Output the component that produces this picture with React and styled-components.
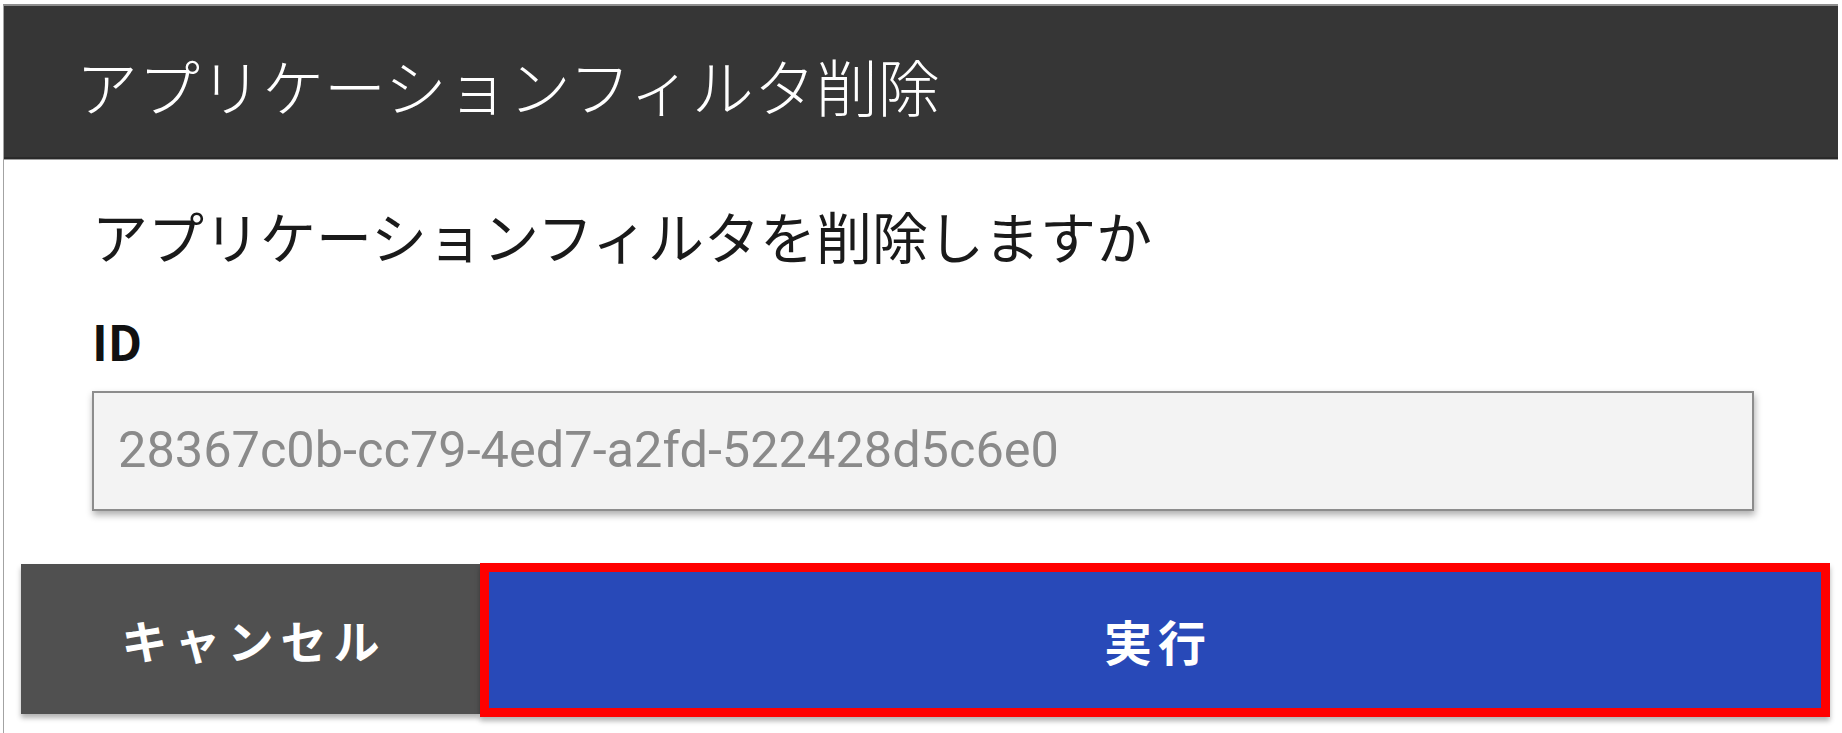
import React from "react";
import styled, { createGlobalStyle } from "styled-components";

const GlobalStyle = createGlobalStyle`
  html, body {
    margin: 0;
    background: #ffffff;
  }
  body {
    font-family: "Noto Sans CJK JP", "Noto Sans", sans-serif;
  }
`;

const Page = styled.div`
  padding: 4px 0 0 3px;
  height: 733px;
  box-sizing: border-box;
  overflow: hidden;
`;

const Dialog = styled.div`
  width: 1835px;
  border-left: 1px solid #a3a3a3;
  border-top: 2px solid #8e8e8e;
  height: 729px;
  box-sizing: border-box;
`;

const Header = styled.div`
  height: 144px;
  background: #363636;
  border-bottom: 2px solid #2a2a2a;
  box-shadow: 0 1px 0 #a0a0a0;
  display: flex;
  align-items: center;
  padding: 7px 0 0 72px;
`;

const Title = styled.h1`
  margin: 0;
  font-size: 62px;
  font-weight: 300;
  line-height: 1;
  color: #ffffff;
`;

const Body = styled.div`
  padding: 0 0 0 88px;
`;

const Message = styled.p`
  margin: 48px 0 0;
  font-size: 56px;
  font-weight: 400;
  line-height: 1;
  color: #1a1a1a;
`;

const Label = styled.div`
  margin-top: 53px;
  font-size: 48px;
  font-weight: 700;
  line-height: 1;
  color: #111111;
`;

const IdField = styled.input`
  display: block;
  margin-top: 27px;
  width: 1662px;
  height: 120px;
  box-sizing: border-box;
  padding: 0 0 4px 24px;
  border: 2px solid #8c8c8c;
  background: #f3f3f3;
  box-shadow: 1px 4px 7px rgba(0, 0, 0, 0.32);
  font-family: Roboto, "Liberation Sans", sans-serif;
  font-size: 50.5px;
  color: #8a8a8a;
  outline: none;
`;

const Actions = styled.div`
  display: flex;
  align-items: flex-start;
  margin-top: 52px;
  padding-left: 17px;
`;

const ActionButton = styled.button`
  display: flex;
  align-items: center;
  justify-content: center;
  box-sizing: border-box;
  font-family: "Noto Sans CJK JP", "Noto Sans", sans-serif;
  font-weight: 700;
  color: #ffffff;
  cursor: pointer;
  box-shadow: 0 4px 5px rgba(0, 0, 0, 0.3);
  width: ${(p) => p.$width}px;
  height: ${(p) => p.$height}px;
  margin-top: ${(p) => p.$offset || 0}px;
  background: ${(p) => p.$bg};
  border: ${(p) => (p.$highlight ? "9px solid #ff0000" : "none")};
  font-size: ${(p) => p.$size}px;
  letter-spacing: ${(p) => p.$spacing}px;
  padding: 0 0 0 ${(p) => p.$spacing}px;
`;

export default function App() {
  return (
    <>
      <GlobalStyle />
      <Page>
        <Dialog>
          <Header>
            <Title>アプリケーションフィルタ削除</Title>
          </Header>
          <Body>
            <Message>アプリケーションフィルタを削除しますか</Message>
            <Label>ID</Label>
            <IdField readOnly value="28367c0b-cc79-4ed7-a2fd-522428d5c6e0" />
          </Body>
          <Actions>
            <ActionButton
              $width={459}
              $height={150}
              $offset={1}
              $bg="#505050"
              $size={46}
              $spacing={7}
            >
              キャンセル
            </ActionButton>
            <ActionButton
              $width={1350}
              $height={154}
              $bg="#2849b8"
              $size={48}
              $spacing={6}
              $highlight
            >
              実行
            </ActionButton>
          </Actions>
        </Dialog>
      </Page>
    </>
  );
}
